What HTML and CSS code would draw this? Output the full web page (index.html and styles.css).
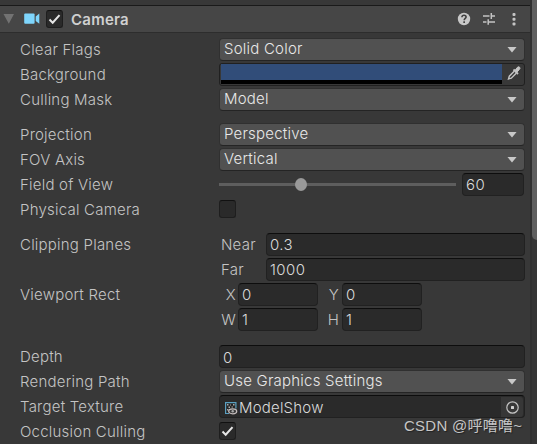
FILE: index.html
```html
<!DOCTYPE html>
<html lang="en">
<head>
<meta charset="utf-8">
<title>Camera</title>
<link rel="stylesheet" href="styles.css">
</head>
<body>
<div class="inspector">
  <main class="panel">
    <header class="header">
      <svg class="fold" width="12" height="10" viewBox="0 0 12 10"><path d="M0.5 0h10.5L5.8 9.7z" fill="#727272"/></svg>
      <svg class="cam" width="16" height="12" viewBox="0 0 16 12" fill="#7fd6fd"><rect x="0.2" y="0.6" width="10.4" height="10.2" rx="1"/><path d="M15.3 0.6v10.2L11.7 8V3.4z"/></svg>
      <span class="check"><svg width="17" height="18" viewBox="0 0 17 18"><path d="M3.5 9.500l3.200 3.200 6.800-7.600" fill="none" stroke="#e6e6e6" stroke-width="2"/></svg></span>
      <h1 class="title">Camera</h1>
      <svg class="actions" width="62" height="14" viewBox="0 0 62 14">
        <circle cx="7" cy="7" r="6.200" fill="#c8c8c8"/>
        <path d="M4.900 5.200C5 3.900 5.800 3.300 7 3.300s2.100.7 2.100 1.800C9.100 6.500 7.200 6.500 7.200 8.300" fill="none" stroke="#414141" stroke-width="1.600"/>
        <rect x="6.300" y="9.300" width="1.700" height="1.700" fill="#414141"/>
        <path d="M26 4h6.500M34.300 4H38M34.300 1v6M26 10h3.500M31.200 10H38M31.200 7.300v5.500" fill="none" stroke="#c4c4c4" stroke-width="1.500"/>
        <g fill="#c4c4c4"><rect x="55.500" y="1" width="3" height="3" rx="1"/><rect x="55.500" y="5.700" width="3" height="3" rx="1"/><rect x="55.500" y="10.400" width="3" height="3" rx="1"/></g>
      </svg>
    </header>
    <div class="rows">
      <div class="row"><span class="label">Clear Flags</span><div class="drop"><span>Solid Color</span><i class="arrow"></i></div></div>
      <div class="row"><span class="label">Background</span>
        <div class="color"><span class="swatch"></span>
          <svg class="dropper" width="14" height="15" viewBox="0 0 14 15"><path d="M6.500 3.500l4.500 4.500" stroke="#c4c4c4" stroke-width="1.800"/><path d="M8 4.500l2.200-3q1.400-1.300 2.400-.3t-.3 2.400L9.800 6.300z" fill="#c4c4c4" stroke="#c4c4c4"/><path d="M7.200 5.300L2.300 10.200 1.500 13l2.800-.8 4.900-4.900" fill="none" stroke="#c4c4c4" stroke-width="1.400"/></svg>
        </div></div>
      <div class="row"><span class="label">Culling Mask</span><div class="drop"><span>Model</span><i class="arrow"></i></div></div>
      <div class="row section"><span class="label">Projection</span><div class="drop"><span>Perspective</span><i class="arrow"></i></div></div>
      <div class="row"><span class="label">FOV Axis</span><div class="drop"><span>Vertical</span><i class="arrow"></i></div></div>
      <div class="row"><span class="label">Field of View</span><div class="slider"><span class="knob"></span></div><div class="field fov">60</div></div>
      <div class="row"><span class="label">Physical Camera</span><span class="check toggle"></span></div>
      <div class="row section"><span class="label">Clipping Planes</span><span class="sub">Near</span><div class="field grow">0.3</div></div>
      <div class="row"><span class="label"></span><span class="sub">Far</span><div class="field grow">1000</div></div>
      <div class="row"><span class="label">Viewport Rect</span><span class="axis">X</span><div class="field num">0</div><span class="axis second">Y</span><div class="field num">0</div></div>
      <div class="row"><span class="label"></span><span class="axis">W</span><div class="field num">1</div><span class="axis second">H</span><div class="field num">1</div></div>
      <div class="row depth"><span class="label">Depth</span><div class="field grow low">0</div></div>
      <div class="row"><span class="label">Rendering Path</span><div class="drop"><span>Use Graphics Settings</span><i class="arrow"></i></div></div>
      <div class="row"><span class="label">Target Texture</span>
        <div class="field grow low object">
          <svg class="texture" width="13" height="13" viewBox="0 0 13 13"><path d="M4 11.500H.6V.6h10.300v6" fill="#252525" stroke="#5a9fc0" stroke-width="1.200"/><path d="M2 2h1.500v1.500H2zM5 2.500h1v1H5zM8 2h1.500v1.500H8zM3.500 4.500H5V6H3.500zM6.500 4.500H8v1H6.500zM2 7h1.500v1.500H2z" fill="#aaa"/><ellipse cx="7.700" cy="9.300" rx="4" ry="2.500" fill="#3b3b3b" stroke="#c4bcbc" stroke-width="1.300"/><circle cx="7.700" cy="9.300" r="1.200" fill="#aaa"/></svg>
          <span>ModelShow</span>
          <span class="picker"><svg width="13" height="13" viewBox="0 0 13 13"><circle cx="6.500" cy="6.500" r="5.700" fill="none" stroke="#c4c4c4" stroke-width="1.200"/><rect x="5" y="5" width="3" height="3" rx=".6" fill="#d0d0d0"/></svg></span>
        </div></div>
      <div class="row"><span class="label">Occlusion Culling</span><span class="check toggle"><svg width="17" height="18" viewBox="0 0 17 18"><path d="M3.500 9.500l3.200 3.200 6.800-7.600" fill="none" stroke="#e6e6e6" stroke-width="2"/></svg></span></div>
    </div>
  </main>
  <aside class="scroll"><div class="thumb"></div></aside>
  <div class="watermark">CSDN @呼噜噜~</div>
</div>
</body>
</html>
```
FILE: styles.css
```css
* { box-sizing: border-box; }
body { margin: 0; background: #383838; color: #c4c4c4; font: 300 15px/24px Inter, "Noto Sans CJK SC", sans-serif; overflow: hidden; }
.inspector { position: relative; display: flex; width: 537px; height: 444px; overflow: hidden; }
.panel { width: 530px; padding-top: 5px; }
.header { display: flex; align-items: center; height: 28px; padding-left: 3px; background: #464646; border-top: 1px solid #1a1a1a; border-bottom: 1px solid #2d2d2d; }
.fold { margin-right: 9px; }
.cam { margin-right: 6px; }
.check { display: block; width: 17px; height: 18px; border: 1px solid #1e1e1e; border-top-color: #111; border-radius: 3px; background: #2a2a2a; }
.check svg { display: block; margin: -1px; }
.title { margin: 2px auto 0 8px; font-size: 15px; font-weight: 600; letter-spacing: .25px; color: #d0d0d0; }
.actions { margin-right: 11px; }
.rows { padding: 5px 5px 0 20px; letter-spacing: .22px; }
.row { display: flex; height: 25px; }
.section { margin-top: 10px; }
.depth { margin-top: 12px; }
.label { flex: none; width: 199px; }
.drop { display: flex; justify-content: space-between; align-items: center; flex: 1; height: 23px; padding: 0 7px 0 4px; border: 1px solid #303030; border-bottom-color: #242424; border-radius: 4px; background: #515151; color: #e8e8e8; line-height: 20px; }
.drop span { padding-bottom: 2px; }
.arrow { width: 10px; height: 6px; background: #c8c8c8; clip-path: polygon(0 0, 100% 0, 50% 100%); }
.color { display: flex; flex: 1; height: 23px; border: 1px solid #202020; border-radius: 3px; background: #383838; }
.swatch { width: 281px; height: 20px; margin-left: 1px; background: #314d79; border-bottom: 4px solid #000; }
.dropper { margin: 2px 0 0 5px; }
.field { height: 23px; padding-left: 3px; border: 1px solid #212121; border-top-color: #0d0d0d; border-radius: 4px; background: #2a2a2a; color: #dadada; line-height: 22px; letter-spacing: .45px; }
.low { line-height: 24px; }
.grow { flex: 1; }
.slider { width: 237px; height: 3px; margin: 10px 6px 0 0; background: #5e5e5e; }
.knob { display: block; width: 12px; height: 13px; margin: -5px 0 0 76px; border-radius: 50%; background: #999; }
.fov { width: 62px; }
.toggle { margin-top: 2px; }
.sub { width: 47px; padding-left: 2px; }
.axis { width: 19px; padding-right: 2px; text-align: right; }
.second { width: 24px; padding-right: 3px; }
.num { width: 80px; }
.object { display: flex; padding-left: 5px; letter-spacing: .2px; }
.texture { margin: 6px 1px 0 0; }
.picker { display: flex; align-items: center; justify-content: center; width: 22px; height: 20px; margin: 1px 1px 0 auto; background: #373737; border-radius: 0 3px 3px 0; }
.scroll { width: 7px; background: #353535; border-left: 2px solid #303030; }
.thumb { width: 10px; height: 240px; background: #5f5f5f; border-radius: 0 0 5px 5px; }
.watermark { position: absolute; left: 404px; top: 414px; color: #c6c6c6; font: 15px/24px "Liberation Sans", "Noto Sans CJK SC", sans-serif; letter-spacing: .25px; white-space: nowrap; text-shadow: 1px 1px 1px #222; }
```
